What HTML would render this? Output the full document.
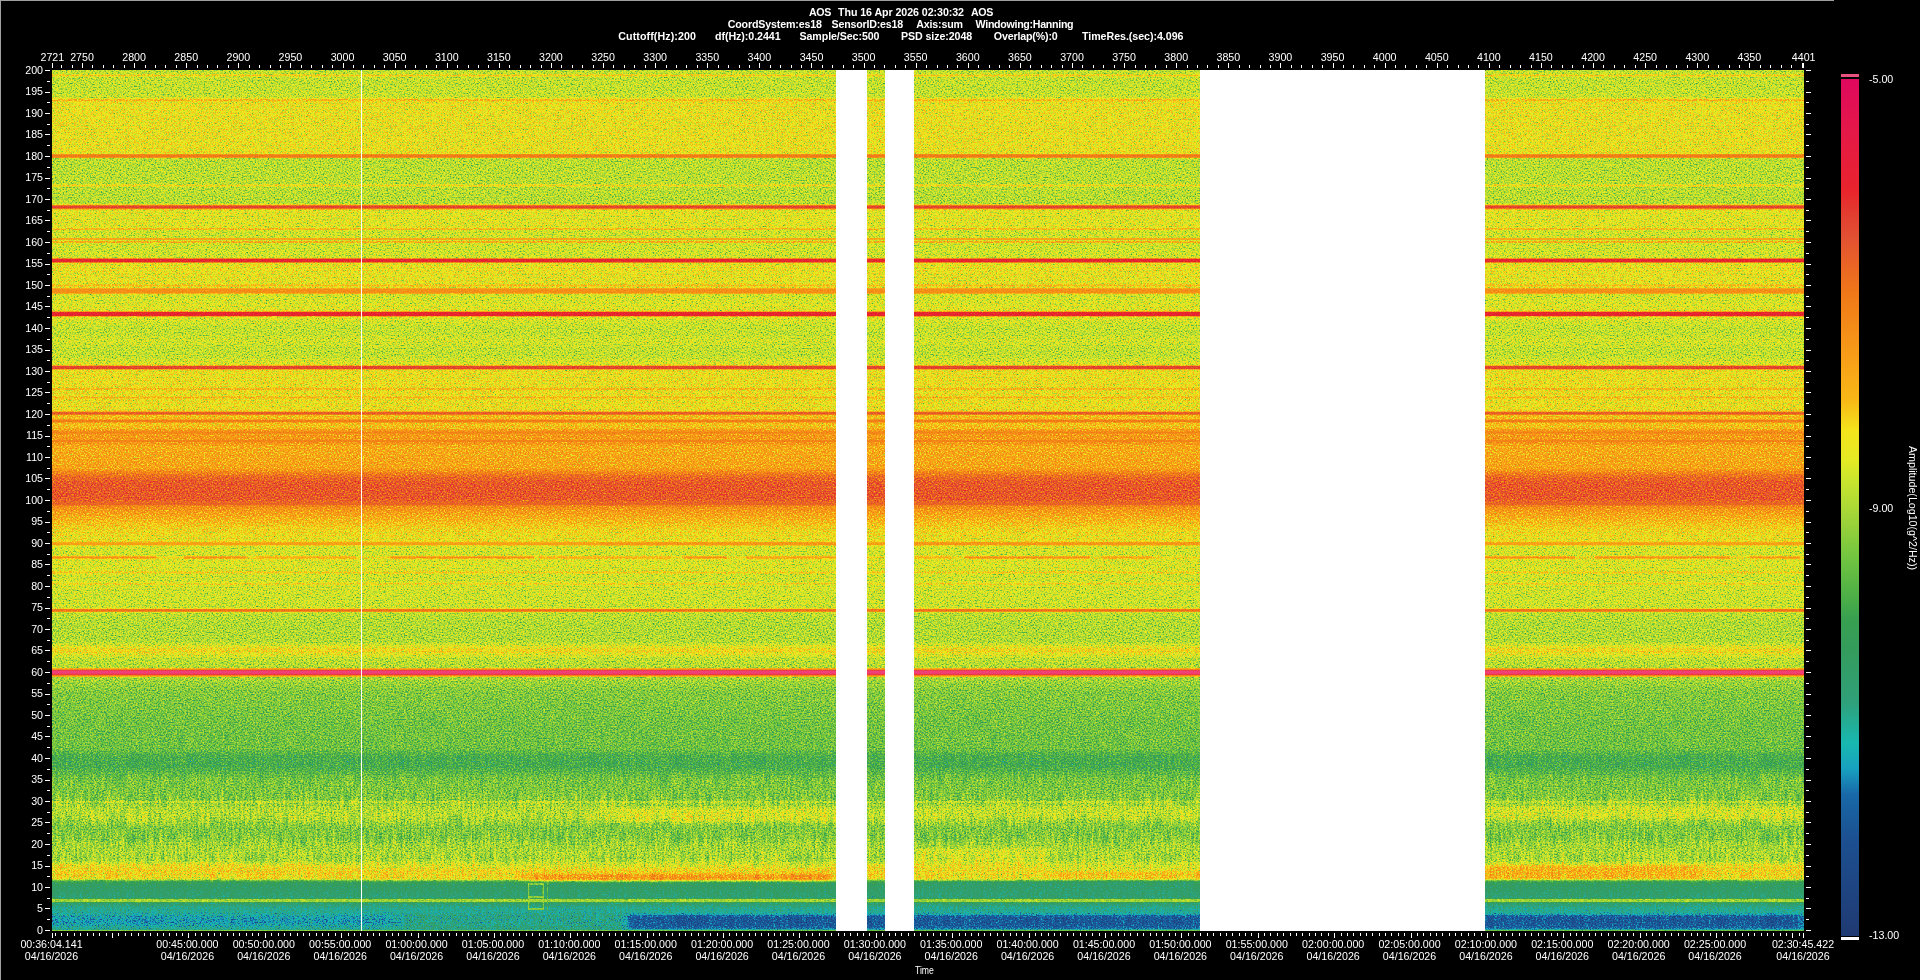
<!DOCTYPE html>
<html><head><meta charset="utf-8"><title>AOS spectrogram</title>
<style>
html,body{margin:0;padding:0;background:#000;}
body{width:1920px;height:980px;position:relative;overflow:hidden;
 font-family:"Liberation Sans",sans-serif;font-size:10.67px;color:#fff;line-height:12px;}
.t{position:absolute;white-space:pre;}
#tx{position:absolute;left:0;top:0;width:1920px;height:980px;will-change:transform;}
.b{font-weight:bold;}
.c{transform:translateX(-50%);text-align:center;}
.r{text-align:right;}
svg{position:absolute;left:0;top:0;}
</style></head><body>
<svg width="1752" height="861" viewBox="0 0 1752 861" style="left:52px;top:70px">
<defs>
<linearGradient id="prof" x1="0" y1="0" x2="0" y2="1"><stop offset="0.00000" stop-color="#861fff"/><stop offset="0.00465" stop-color="#861fff"/><stop offset="0.00581" stop-color="#9d1fff"/><stop offset="0.00697" stop-color="#9d1fff"/><stop offset="0.00813" stop-color="#861fff"/><stop offset="0.03020" stop-color="#871fff"/><stop offset="0.03252" stop-color="#8b1fff"/><stop offset="0.03368" stop-color="#9a1fff"/><stop offset="0.03426" stop-color="#a11fff"/><stop offset="0.03542" stop-color="#a11fff"/><stop offset="0.03659" stop-color="#971fff"/><stop offset="0.03717" stop-color="#931fff"/><stop offset="0.09640" stop-color="#931fff"/><stop offset="0.09698" stop-color="#921fff"/><stop offset="0.09756" stop-color="#9e1fcd"/><stop offset="0.09814" stop-color="#b51f7a"/><stop offset="0.09872" stop-color="#be1f59"/><stop offset="0.10105" stop-color="#be1f59"/><stop offset="0.10163" stop-color="#b31f7a"/><stop offset="0.10221" stop-color="#971fcd"/><stop offset="0.10279" stop-color="#851fff"/><stop offset="0.10337" stop-color="#841fff"/><stop offset="0.13240" stop-color="#841fff"/><stop offset="0.13357" stop-color="#991fff"/><stop offset="0.13473" stop-color="#991fff"/><stop offset="0.13589" stop-color="#841fff"/><stop offset="0.15447" stop-color="#831fff"/><stop offset="0.15563" stop-color="#851fff"/><stop offset="0.15738" stop-color="#c11f83"/><stop offset="0.15796" stop-color="#d41f59"/><stop offset="0.16028" stop-color="#d41f59"/><stop offset="0.16202" stop-color="#9f1fd6"/><stop offset="0.16260" stop-color="#8e1fff"/><stop offset="0.16376" stop-color="#901fff"/><stop offset="0.18235" stop-color="#8f1fff"/><stop offset="0.18293" stop-color="#8f1fff"/><stop offset="0.18409" stop-color="#a11fff"/><stop offset="0.18525" stop-color="#a11fff"/><stop offset="0.18641" stop-color="#8a1fff"/><stop offset="0.18815" stop-color="#8a1fff"/><stop offset="0.19454" stop-color="#8a1fff"/><stop offset="0.19570" stop-color="#a81f59"/><stop offset="0.19686" stop-color="#a81f59"/><stop offset="0.19803" stop-color="#8a1fff"/><stop offset="0.19919" stop-color="#a61fff"/><stop offset="0.20035" stop-color="#a61fff"/><stop offset="0.20151" stop-color="#8a1fff"/><stop offset="0.21719" stop-color="#8a1fff"/><stop offset="0.21777" stop-color="#8b1fff"/><stop offset="0.21835" stop-color="#9c1fde"/><stop offset="0.21951" stop-color="#d31f6f"/><stop offset="0.22009" stop-color="#de1f59"/><stop offset="0.22242" stop-color="#de1f59"/><stop offset="0.22300" stop-color="#d41f6f"/><stop offset="0.22416" stop-color="#a11fde"/><stop offset="0.22474" stop-color="#921fff"/><stop offset="0.22822" stop-color="#931fff"/><stop offset="0.24855" stop-color="#911fff"/><stop offset="0.24971" stop-color="#a11fff"/><stop offset="0.25087" stop-color="#a11fff"/><stop offset="0.25203" stop-color="#901fff"/><stop offset="0.25261" stop-color="#901fff"/><stop offset="0.25436" stop-color="#b41f59"/><stop offset="0.25900" stop-color="#b41f59"/><stop offset="0.26074" stop-color="#8c1fff"/><stop offset="0.26423" stop-color="#8b1fff"/><stop offset="0.27933" stop-color="#901fff"/><stop offset="0.27991" stop-color="#901fff"/><stop offset="0.28165" stop-color="#df1f59"/><stop offset="0.28513" stop-color="#df1f59"/><stop offset="0.28688" stop-color="#8e1fff"/><stop offset="0.29384" stop-color="#8a1fff"/><stop offset="0.29849" stop-color="#871fff"/><stop offset="0.30604" stop-color="#861fff"/><stop offset="0.31359" stop-color="#8b1fff"/><stop offset="0.32462" stop-color="#861fff"/><stop offset="0.33217" stop-color="#861fff"/><stop offset="0.34146" stop-color="#8f1fff"/><stop offset="0.34262" stop-color="#901fff"/><stop offset="0.34437" stop-color="#d41f59"/><stop offset="0.34669" stop-color="#d41f59"/><stop offset="0.34843" stop-color="#931fff"/><stop offset="0.35192" stop-color="#941fff"/><stop offset="0.36876" stop-color="#941fff"/><stop offset="0.36992" stop-color="#a31fff"/><stop offset="0.37108" stop-color="#a31fff"/><stop offset="0.37224" stop-color="#941fff"/><stop offset="0.37863" stop-color="#941fff"/><stop offset="0.37979" stop-color="#a31fff"/><stop offset="0.38095" stop-color="#a31fff"/><stop offset="0.38211" stop-color="#941fff"/><stop offset="0.39489" stop-color="#941fff"/><stop offset="0.39605" stop-color="#971fff"/><stop offset="0.39663" stop-color="#a61fd3"/><stop offset="0.39779" stop-color="#c91f64"/><stop offset="0.39837" stop-color="#cc1f59"/><stop offset="0.39954" stop-color="#cc1f59"/><stop offset="0.40128" stop-color="#a11fff"/><stop offset="0.40476" stop-color="#a11fff"/><stop offset="0.40534" stop-color="#a41fe9"/><stop offset="0.40650" stop-color="#b71f7a"/><stop offset="0.40708" stop-color="#bd1f59"/><stop offset="0.40825" stop-color="#bd1f59"/><stop offset="0.40883" stop-color="#b71f7a"/><stop offset="0.40999" stop-color="#a31fe9"/><stop offset="0.41057" stop-color="#a01fff"/><stop offset="0.41580" stop-color="#a11fff"/><stop offset="0.41812" stop-color="#af1fff"/><stop offset="0.41928" stop-color="#af1fff"/><stop offset="0.42044" stop-color="#ba1f59"/><stop offset="0.42160" stop-color="#ba1f59"/><stop offset="0.42276" stop-color="#af1fff"/><stop offset="0.42915" stop-color="#b01fff"/><stop offset="0.43031" stop-color="#ba1f59"/><stop offset="0.43148" stop-color="#ba1f59"/><stop offset="0.43264" stop-color="#b01fff"/><stop offset="0.43438" stop-color="#b01fff"/><stop offset="0.43670" stop-color="#a81fff"/><stop offset="0.46225" stop-color="#ab1fff"/><stop offset="0.46864" stop-color="#bc1fff"/><stop offset="0.47271" stop-color="#c61fff"/><stop offset="0.47967" stop-color="#cd1fff"/><stop offset="0.49826" stop-color="#cd1fff"/><stop offset="0.50116" stop-color="#c71fff"/><stop offset="0.50174" stop-color="#c61fde"/><stop offset="0.50348" stop-color="#c91f59"/><stop offset="0.50407" stop-color="#c91f59"/><stop offset="0.50465" stop-color="#c71f7a"/><stop offset="0.50523" stop-color="#c21fb2"/><stop offset="0.50581" stop-color="#bd1fe9"/><stop offset="0.50639" stop-color="#b91fff"/><stop offset="0.50755" stop-color="#b51fff"/><stop offset="0.51858" stop-color="#a81fff"/><stop offset="0.53310" stop-color="#991fff"/><stop offset="0.53659" stop-color="#971fff"/><stop offset="0.54297" stop-color="#941fff"/><stop offset="0.54704" stop-color="#941fff"/><stop offset="0.54762" stop-color="#981fde"/><stop offset="0.54878" stop-color="#a71f6f"/><stop offset="0.54936" stop-color="#ab1f59"/><stop offset="0.55110" stop-color="#ab1f59"/><stop offset="0.55168" stop-color="#a51f7a"/><stop offset="0.55285" stop-color="#901fe9"/><stop offset="0.55343" stop-color="#8c1fff"/><stop offset="0.56446" stop-color="#8a1fff"/><stop offset="0.56562" stop-color="#991fff"/><stop offset="0.56678" stop-color="#991fff"/><stop offset="0.56794" stop-color="#8d1fff"/><stop offset="0.58188" stop-color="#8d1fff"/><stop offset="0.58304" stop-color="#9c1fff"/><stop offset="0.58420" stop-color="#9c1fff"/><stop offset="0.58537" stop-color="#8a1fff"/><stop offset="0.59466" stop-color="#8a1fff"/><stop offset="0.59524" stop-color="#8f1fff"/><stop offset="0.59582" stop-color="#961fff"/><stop offset="0.59640" stop-color="#991fff"/><stop offset="0.59698" stop-color="#991fff"/><stop offset="0.59756" stop-color="#951fff"/><stop offset="0.59814" stop-color="#8e1fff"/><stop offset="0.59872" stop-color="#8b1fff"/><stop offset="0.62485" stop-color="#881fff"/><stop offset="0.62544" stop-color="#971fd3"/><stop offset="0.62660" stop-color="#be1f64"/><stop offset="0.62718" stop-color="#c21f59"/><stop offset="0.62834" stop-color="#c21f59"/><stop offset="0.62892" stop-color="#b61f7a"/><stop offset="0.63008" stop-color="#8d1fe9"/><stop offset="0.63066" stop-color="#851fff"/><stop offset="0.64286" stop-color="#821fff"/><stop offset="0.66434" stop-color="#821fff"/><stop offset="0.67015" stop-color="#911fff"/><stop offset="0.67073" stop-color="#911fff"/><stop offset="0.67305" stop-color="#971fff"/><stop offset="0.67538" stop-color="#971fff"/><stop offset="0.67770" stop-color="#911fff"/><stop offset="0.67828" stop-color="#911fff"/><stop offset="0.68409" stop-color="#851fff"/><stop offset="0.69396" stop-color="#831fff"/><stop offset="0.69570" stop-color="#b81f59"/><stop offset="0.70383" stop-color="#b81f59"/><stop offset="0.70557" stop-color="#7f1fff"/><stop offset="0.70848" stop-color="#7e1fff"/><stop offset="0.72125" stop-color="#7638ff"/><stop offset="0.73171" stop-color="#754cff"/><stop offset="0.76016" stop-color="#715cff"/><stop offset="0.78862" stop-color="#706cff"/><stop offset="0.79675" stop-color="#6470ff"/><stop offset="0.80139" stop-color="#6373ff"/><stop offset="0.80836" stop-color="#6285ff"/><stop offset="0.82172" stop-color="#70a8ff"/><stop offset="0.82520" stop-color="#73b1ff"/><stop offset="0.84553" stop-color="#75e7ff"/><stop offset="0.84843" stop-color="#78eeff"/><stop offset="0.84959" stop-color="#85f1ff"/><stop offset="0.85075" stop-color="#85f4ff"/><stop offset="0.85192" stop-color="#7cf7ff"/><stop offset="0.85482" stop-color="#7fffff"/><stop offset="0.85772" stop-color="#82ffff"/><stop offset="0.86760" stop-color="#83ffff"/><stop offset="0.88037" stop-color="#75ffff"/><stop offset="0.89199" stop-color="#75ffff"/><stop offset="0.89895" stop-color="#7dffff"/><stop offset="0.90883" stop-color="#80ffff"/><stop offset="0.91521" stop-color="#7effff"/><stop offset="0.91870" stop-color="#81ffff"/><stop offset="0.92334" stop-color="#93ffff"/><stop offset="0.92915" stop-color="#99ffff"/><stop offset="0.93612" stop-color="#98ffff"/><stop offset="0.93844" stop-color="#94ffff"/><stop offset="0.93961" stop-color="#92dfe2"/><stop offset="0.94193" stop-color="#639fa9"/><stop offset="0.94309" stop-color="#5e808c"/><stop offset="0.94541" stop-color="#54808c"/><stop offset="0.96109" stop-color="#4b808c"/><stop offset="0.96167" stop-color="#4b808c"/><stop offset="0.96341" stop-color="#7d808c"/><stop offset="0.96574" stop-color="#7d808c"/><stop offset="0.96748" stop-color="#4c808c"/><stop offset="0.96864" stop-color="#4c808c"/><stop offset="0.97329" stop-color="#42808c"/><stop offset="0.97793" stop-color="#40808c"/><stop offset="0.98026" stop-color="#3e80b9"/><stop offset="0.98258" stop-color="#3980e6"/><stop offset="0.98374" stop-color="#3780e6"/><stop offset="0.98955" stop-color="#3380e6"/><stop offset="0.99768" stop-color="#4280e6"/><stop offset="0.99826" stop-color="#4380a6"/><stop offset="0.99884" stop-color="#758066"/><stop offset="1.00000" stop-color="#758066"/></linearGradient>
<filter id="spec" x="0" y="0" width="100%%" height="100%%" filterUnits="objectBoundingBox" color-interpolation-filters="sRGB">
<feColorMatrix in="SourceGraphic" type="matrix" values="1 0 0 0 0 1 0 0 0 0 1 0 0 0 0 0 0 0 0 1" result="V0"/>
<feColorMatrix in="SourceGraphic" type="matrix" values="0 1 0 0 0 0 1 0 0 0 0 1 0 0 0 0 0 0 0 1" result="M"/>
<feTurbulence type="fractalNoise" baseFrequency="0.63 0.69" numOctaves="2" seed="7" result="n"/>
<feColorMatrix in="n" type="matrix" values="1 0 0 0 0 1 0 0 0 0 1 0 0 0 0 0 0 0 0 1" result="n0"/>
<feComponentTransfer in="n0" result="n1"><feFuncR type="table" tableValues="0.0000 0.0000 0.0000 0.0000 0.0000 0.0000 0.0000 0.0000 0.0288 0.0689 0.1077 0.1451 0.1813 0.2162 0.2500 0.2825 0.3138 0.3441 0.3732 0.4013 0.4284 0.4545 0.4796 0.5039 0.5273 0.5499 0.5716 0.5927 0.6130 0.6326 0.6515 0.6698 0.6875 0.7046 0.7212 0.7373 0.7528 0.7679 0.7825 0.7967 0.8105 0.8239 0.8369 0.8495 0.8618 0.8738 0.8855 0.8968 0.9079 0.9187 0.9292 0.9395 0.9495 0.9593 0.9689 0.9782 0.9873 0.9963 1.0000 1.0000 1.0000 1.0000 1.0000 1.0000 1.0000"/><feFuncG type="table" tableValues="0.0000 0.0000 0.0000 0.0000 0.0000 0.0000 0.0000 0.0000 0.0288 0.0689 0.1077 0.1451 0.1813 0.2162 0.2500 0.2825 0.3138 0.3441 0.3732 0.4013 0.4284 0.4545 0.4796 0.5039 0.5273 0.5499 0.5716 0.5927 0.6130 0.6326 0.6515 0.6698 0.6875 0.7046 0.7212 0.7373 0.7528 0.7679 0.7825 0.7967 0.8105 0.8239 0.8369 0.8495 0.8618 0.8738 0.8855 0.8968 0.9079 0.9187 0.9292 0.9395 0.9495 0.9593 0.9689 0.9782 0.9873 0.9963 1.0000 1.0000 1.0000 1.0000 1.0000 1.0000 1.0000"/><feFuncB type="table" tableValues="0.0000 0.0000 0.0000 0.0000 0.0000 0.0000 0.0000 0.0000 0.0288 0.0689 0.1077 0.1451 0.1813 0.2162 0.2500 0.2825 0.3138 0.3441 0.3732 0.4013 0.4284 0.4545 0.4796 0.5039 0.5273 0.5499 0.5716 0.5927 0.6130 0.6326 0.6515 0.6698 0.6875 0.7046 0.7212 0.7373 0.7528 0.7679 0.7825 0.7967 0.8105 0.8239 0.8369 0.8495 0.8618 0.8738 0.8855 0.8968 0.9079 0.9187 0.9292 0.9395 0.9495 0.9593 0.9689 0.9782 0.9873 0.9963 1.0000 1.0000 1.0000 1.0000 1.0000 1.0000 1.0000"/></feComponentTransfer>
<feTurbulence type="fractalNoise" baseFrequency="0.47 0.05" numOctaves="2" seed="11" result="s"/>
<feColorMatrix in="s" type="matrix" values="1 0 0 0 0 1 0 0 0 0 1 0 0 0 0 0 0 0 0 1" result="s0"/>
<feComposite in="M" in2="s0" operator="arithmetic" k1="1" k2="-0.5" k3="0" k4="0.5" result="P"/>
<feColorMatrix in="SourceGraphic" type="matrix" values="0 0 1 0 0 0 0 1 0 0 0 0 1 0 0 0 0 0 0 1" result="Wt"/>
<feComposite in="Wt" in2="n1" operator="arithmetic" k1="1" k2="-0.6875" k3="0" k4="0.6875" result="n2"/>
<feComposite in="V0" in2="n2" operator="arithmetic" k1="0" k2="1" k3="0.32" k4="-0.22" result="v1"/>
<feComposite in="v1" in2="P" operator="arithmetic" k1="0" k2="1" k3="0.19" k4="-0.095" result="v"/>
<feComponentTransfer in="v">
<feFuncR type="table" tableValues="0.125 0.124 0.123 0.121 0.120 0.118 0.117 0.116 0.114 0.113 0.111 0.110 0.107 0.104 0.101 0.098 0.096 0.094 0.094 0.094 0.094 0.094 0.094 0.104 0.122 0.141 0.160 0.179 0.190 0.192 0.195 0.197 0.200 0.203 0.206 0.211 0.215 0.220 0.251 0.282 0.314 0.345 0.376 0.408 0.439 0.478 0.518 0.557 0.596 0.635 0.675 0.711 0.748 0.784 0.828 0.872 0.903 0.921 0.939 0.957 0.961 0.966 0.970 0.973 0.973 0.973 0.973 0.973 0.969 0.965 0.961 0.957 0.953 0.949 0.945 0.941 0.933 0.925 0.918 0.910 0.901 0.892 0.886 0.886 0.886 0.894 0.902 0.910 0.908 0.905 0.903 0.901 0.899 0.896 0.894 0.892 0.889 0.886 0.884 0.881 0.878"/>
<feFuncG type="table" tableValues="0.227 0.235 0.242 0.250 0.257 0.265 0.272 0.280 0.287 0.295 0.302 0.310 0.328 0.345 0.363 0.381 0.399 0.444 0.518 0.591 0.643 0.675 0.706 0.712 0.693 0.675 0.656 0.637 0.626 0.624 0.621 0.618 0.616 0.613 0.614 0.618 0.623 0.627 0.651 0.675 0.693 0.712 0.731 0.750 0.769 0.782 0.795 0.808 0.821 0.834 0.847 0.863 0.878 0.894 0.904 0.913 0.914 0.908 0.901 0.894 0.845 0.796 0.746 0.711 0.690 0.669 0.648 0.627 0.608 0.588 0.569 0.549 0.529 0.510 0.490 0.471 0.447 0.424 0.400 0.376 0.352 0.328 0.302 0.274 0.246 0.211 0.176 0.141 0.134 0.128 0.121 0.114 0.108 0.101 0.094 0.084 0.073 0.063 0.052 0.042 0.031"/>
<feFuncB type="table" tableValues="0.447 0.458 0.468 0.479 0.490 0.501 0.511 0.522 0.533 0.543 0.554 0.565 0.582 0.599 0.616 0.633 0.650 0.675 0.706 0.737 0.742 0.722 0.701 0.668 0.624 0.580 0.536 0.493 0.461 0.443 0.425 0.407 0.388 0.370 0.354 0.341 0.327 0.314 0.298 0.282 0.276 0.270 0.264 0.257 0.251 0.244 0.238 0.231 0.225 0.218 0.212 0.201 0.191 0.180 0.165 0.149 0.137 0.128 0.119 0.110 0.103 0.096 0.090 0.087 0.089 0.091 0.092 0.094 0.094 0.094 0.094 0.094 0.094 0.094 0.094 0.094 0.110 0.125 0.141 0.157 0.172 0.187 0.195 0.192 0.189 0.183 0.178 0.173 0.188 0.204 0.220 0.235 0.251 0.267 0.282 0.297 0.311 0.325 0.340 0.354 0.369"/>
<feFuncA type="linear" slope="0" intercept="1"/>
</feComponentTransfer>
</filter>
<filter id="pb" x="-2%" y="-5%" width="104%" height="110%"><feGaussianBlur stdDeviation="6 1.2"/></filter>
</defs>
<g filter="url(#spec)">
<rect x="0" y="0" width="1752" height="861" fill="url(#prof)"/>
<rect x="0" y="486.5" width="104" height="2" fill="#b81e72"/>
<rect x="0" y="485.5" width="104" height="4" fill="#a81eb2" fill-opacity="0.35"/>
<rect x="132" y="486.5" width="62" height="2" fill="#b81e72"/>
<rect x="132" y="485.5" width="62" height="4" fill="#a81eb2" fill-opacity="0.35"/>
<rect x="204" y="486.5" width="100" height="2" fill="#a31e72"/>
<rect x="204" y="485.5" width="100" height="4" fill="#a81eb2" fill-opacity="0.35"/>
<rect x="338" y="486.5" width="144" height="2" fill="#b81e72"/>
<rect x="338" y="485.5" width="144" height="4" fill="#a81eb2" fill-opacity="0.35"/>
<rect x="488" y="486.5" width="131" height="2" fill="#a11e72"/>
<rect x="488" y="485.5" width="131" height="4" fill="#a81eb2" fill-opacity="0.35"/>
<rect x="632" y="486.5" width="43" height="2" fill="#b81e72"/>
<rect x="632" y="485.5" width="43" height="4" fill="#a81eb2" fill-opacity="0.35"/>
<rect x="694" y="486.5" width="90" height="2" fill="#ab1e72"/>
<rect x="694" y="485.5" width="90" height="4" fill="#a81eb2" fill-opacity="0.35"/>
<rect x="863" y="486.5" width="37" height="2" fill="#a11e72"/>
<rect x="863" y="485.5" width="37" height="4" fill="#a81eb2" fill-opacity="0.35"/>
<rect x="913" y="486.5" width="125" height="2" fill="#b81e72"/>
<rect x="913" y="485.5" width="125" height="4" fill="#a81eb2" fill-opacity="0.35"/>
<rect x="1050" y="486.5" width="50" height="2" fill="#ab1e72"/>
<rect x="1050" y="485.5" width="50" height="4" fill="#a81eb2" fill-opacity="0.35"/>
<rect x="1433" y="486.5" width="90" height="2" fill="#b81e72"/>
<rect x="1433" y="485.5" width="90" height="4" fill="#a81eb2" fill-opacity="0.35"/>
<rect x="1543" y="486.5" width="135" height="2" fill="#b81e72"/>
<rect x="1543" y="485.5" width="135" height="4" fill="#a81eb2" fill-opacity="0.35"/>
<rect x="1698" y="486.5" width="50" height="2" fill="#b21e72"/>
<rect x="1698" y="485.5" width="50" height="4" fill="#a81eb2" fill-opacity="0.35"/>
<rect x="548" y="472.2" width="236" height="3" fill="#b21e99" fill-opacity="0.7"/>
<rect x="862" y="472.2" width="286" height="3" fill="#b21e99" fill-opacity="0.7"/>
<rect x="476" y="813" width="16" height="2" fill="#7f4c7f" fill-opacity="0.85"/>
<rect x="476" y="826" width="16" height="2" fill="#7f4c7f" fill-opacity="0.85"/>
<rect x="476" y="838" width="16" height="2" fill="#7f4c7f" fill-opacity="0.85"/>
<rect x="476" y="813" width="1.5" height="27" fill="#7f4c7f" fill-opacity="0.85"/>
<rect x="490.5" y="813" width="1.5" height="27" fill="#7f4c7f" fill-opacity="0.85"/>
<rect x="495" y="810" width="1" height="30" fill="#774c7f" fill-opacity="0.7"/>
<rect x="468" y="730" width="1" height="80" fill="#874c7f" fill-opacity="0.35"/>
<g filter="url(#pb)">
<rect x="573" y="845" width="1179" height="14" fill="#1a80e6" fill-opacity="0.75"/>
<rect x="348" y="844" width="225" height="15" fill="#4f80e6" fill-opacity="0.55"/>
<rect x="308" y="791" width="168" height="8" fill="#88ffff" fill-opacity="0.5"/>
<rect x="308" y="802" width="168" height="8" fill="#95ffff" fill-opacity="0.6"/>
<rect x="476" y="804" width="308" height="7" fill="#baffff" fill-opacity="0.7"/>
<rect x="476" y="791" width="308" height="7" fill="#87ffff" fill-opacity="0.5"/>
<rect x="862" y="778" width="136" height="32" fill="#93ffff" fill-opacity="0.6"/>
<rect x="998" y="791" width="150" height="10" fill="#85ffff" fill-opacity="0.6"/>
<rect x="998" y="802" width="150" height="7" fill="#a3ffff" fill-opacity="0.6"/>
<rect x="862" y="811" width="286" height="16" fill="#4c808c" fill-opacity="0.5"/>
<rect x="1433" y="796" width="215" height="13" fill="#adffff" fill-opacity="0.6"/>
<rect x="548" y="738" width="236" height="14" fill="#90ffff" fill-opacity="0.65"/>
<rect x="862" y="736" width="286" height="12" fill="#8bffff" fill-opacity="0.5"/>
<rect x="1433" y="736" width="319" height="13" fill="#8fffff" fill-opacity="0.6"/>
</g>
</g>
<rect x="0" y="600" width="1752" height="5" fill="#ea3c40"/>
<rect x="0" y="600.7" width="1752" height="3.1" fill="#f04078"/>
<rect x="784" y="0" width="31" height="861" fill="#fff"/>
<rect x="833" y="0" width="29" height="861" fill="#fff"/>
<rect x="1148" y="0" width="285" height="861" fill="#fff"/>
<rect x="309" y="0" width="1" height="861" fill="#fff"/>
</svg>
<svg width="1920" height="980" viewBox="0 0 1920 980" shape-rendering="crispEdges">
<defs><linearGradient id="cb" x1="0" y1="1" x2="0" y2="0"><stop offset="0.0000" stop-color="#203a72"/><stop offset="0.1100" stop-color="#1c4f90"/><stop offset="0.1650" stop-color="#1868a8"/><stop offset="0.1950" stop-color="#18a0c0"/><stop offset="0.2250" stop-color="#18b8b0"/><stop offset="0.2750" stop-color="#30a078"/><stop offset="0.3350" stop-color="#349c5c"/><stop offset="0.3700" stop-color="#38a050"/><stop offset="0.3900" stop-color="#48ac48"/><stop offset="0.4400" stop-color="#70c440"/><stop offset="0.5000" stop-color="#acd836"/><stop offset="0.5300" stop-color="#c8e42e"/><stop offset="0.5550" stop-color="#e4ea24"/><stop offset="0.5900" stop-color="#f4e41c"/><stop offset="0.6250" stop-color="#f8b816"/><stop offset="0.6700" stop-color="#f8a018"/><stop offset="0.7100" stop-color="#f48c18"/><stop offset="0.7500" stop-color="#f07818"/><stop offset="0.7900" stop-color="#e86028"/><stop offset="0.8160" stop-color="#e25032"/><stop offset="0.8410" stop-color="#e23e30"/><stop offset="0.8700" stop-color="#e8242c"/><stop offset="0.9400" stop-color="#e41848"/><stop offset="1.0000" stop-color="#e0085e"/></linearGradient></defs>
<rect x="0" y="0" width="1834" height="1" fill="#a0a0a0"/>
<rect x="0" y="0" width="1" height="980" fill="#a0a0a0"/>
<rect x="52" y="63" width="1" height="5" fill="#fff"/>
<rect x="61" y="65" width="1" height="3" fill="#fff"/>
<rect x="72" y="65" width="1" height="3" fill="#fff"/>
<rect x="82" y="63" width="1" height="5" fill="#fff"/>
<rect x="92" y="65" width="1" height="3" fill="#fff"/>
<rect x="103" y="65" width="1" height="3" fill="#fff"/>
<rect x="113" y="65" width="1" height="3" fill="#fff"/>
<rect x="124" y="65" width="1" height="3" fill="#fff"/>
<rect x="134" y="63" width="1" height="5" fill="#fff"/>
<rect x="145" y="65" width="1" height="3" fill="#fff"/>
<rect x="155" y="65" width="1" height="3" fill="#fff"/>
<rect x="165" y="65" width="1" height="3" fill="#fff"/>
<rect x="176" y="65" width="1" height="3" fill="#fff"/>
<rect x="186" y="63" width="1" height="5" fill="#fff"/>
<rect x="197" y="65" width="1" height="3" fill="#fff"/>
<rect x="207" y="65" width="1" height="3" fill="#fff"/>
<rect x="217" y="65" width="1" height="3" fill="#fff"/>
<rect x="228" y="65" width="1" height="3" fill="#fff"/>
<rect x="238" y="63" width="1" height="5" fill="#fff"/>
<rect x="249" y="65" width="1" height="3" fill="#fff"/>
<rect x="259" y="65" width="1" height="3" fill="#fff"/>
<rect x="270" y="65" width="1" height="3" fill="#fff"/>
<rect x="280" y="65" width="1" height="3" fill="#fff"/>
<rect x="290" y="63" width="1" height="5" fill="#fff"/>
<rect x="301" y="65" width="1" height="3" fill="#fff"/>
<rect x="311" y="65" width="1" height="3" fill="#fff"/>
<rect x="322" y="65" width="1" height="3" fill="#fff"/>
<rect x="332" y="65" width="1" height="3" fill="#fff"/>
<rect x="343" y="63" width="1" height="5" fill="#fff"/>
<rect x="353" y="65" width="1" height="3" fill="#fff"/>
<rect x="363" y="65" width="1" height="3" fill="#fff"/>
<rect x="374" y="65" width="1" height="3" fill="#fff"/>
<rect x="384" y="65" width="1" height="3" fill="#fff"/>
<rect x="395" y="63" width="1" height="5" fill="#fff"/>
<rect x="405" y="65" width="1" height="3" fill="#fff"/>
<rect x="415" y="65" width="1" height="3" fill="#fff"/>
<rect x="426" y="65" width="1" height="3" fill="#fff"/>
<rect x="436" y="65" width="1" height="3" fill="#fff"/>
<rect x="447" y="63" width="1" height="5" fill="#fff"/>
<rect x="457" y="65" width="1" height="3" fill="#fff"/>
<rect x="468" y="65" width="1" height="3" fill="#fff"/>
<rect x="478" y="65" width="1" height="3" fill="#fff"/>
<rect x="488" y="65" width="1" height="3" fill="#fff"/>
<rect x="499" y="63" width="1" height="5" fill="#fff"/>
<rect x="509" y="65" width="1" height="3" fill="#fff"/>
<rect x="520" y="65" width="1" height="3" fill="#fff"/>
<rect x="530" y="65" width="1" height="3" fill="#fff"/>
<rect x="541" y="65" width="1" height="3" fill="#fff"/>
<rect x="551" y="63" width="1" height="5" fill="#fff"/>
<rect x="561" y="65" width="1" height="3" fill="#fff"/>
<rect x="572" y="65" width="1" height="3" fill="#fff"/>
<rect x="582" y="65" width="1" height="3" fill="#fff"/>
<rect x="593" y="65" width="1" height="3" fill="#fff"/>
<rect x="603" y="63" width="1" height="5" fill="#fff"/>
<rect x="613" y="65" width="1" height="3" fill="#fff"/>
<rect x="624" y="65" width="1" height="3" fill="#fff"/>
<rect x="634" y="65" width="1" height="3" fill="#fff"/>
<rect x="645" y="65" width="1" height="3" fill="#fff"/>
<rect x="655" y="63" width="1" height="5" fill="#fff"/>
<rect x="666" y="65" width="1" height="3" fill="#fff"/>
<rect x="676" y="65" width="1" height="3" fill="#fff"/>
<rect x="686" y="65" width="1" height="3" fill="#fff"/>
<rect x="697" y="65" width="1" height="3" fill="#fff"/>
<rect x="707" y="63" width="1" height="5" fill="#fff"/>
<rect x="718" y="65" width="1" height="3" fill="#fff"/>
<rect x="728" y="65" width="1" height="3" fill="#fff"/>
<rect x="739" y="65" width="1" height="3" fill="#fff"/>
<rect x="749" y="65" width="1" height="3" fill="#fff"/>
<rect x="759" y="63" width="1" height="5" fill="#fff"/>
<rect x="770" y="65" width="1" height="3" fill="#fff"/>
<rect x="780" y="65" width="1" height="3" fill="#fff"/>
<rect x="791" y="65" width="1" height="3" fill="#fff"/>
<rect x="801" y="65" width="1" height="3" fill="#fff"/>
<rect x="811" y="63" width="1" height="5" fill="#fff"/>
<rect x="822" y="65" width="1" height="3" fill="#fff"/>
<rect x="832" y="65" width="1" height="3" fill="#fff"/>
<rect x="843" y="65" width="1" height="3" fill="#fff"/>
<rect x="853" y="65" width="1" height="3" fill="#fff"/>
<rect x="864" y="63" width="1" height="5" fill="#fff"/>
<rect x="874" y="65" width="1" height="3" fill="#fff"/>
<rect x="884" y="65" width="1" height="3" fill="#fff"/>
<rect x="895" y="65" width="1" height="3" fill="#fff"/>
<rect x="905" y="65" width="1" height="3" fill="#fff"/>
<rect x="916" y="63" width="1" height="5" fill="#fff"/>
<rect x="926" y="65" width="1" height="3" fill="#fff"/>
<rect x="937" y="65" width="1" height="3" fill="#fff"/>
<rect x="947" y="65" width="1" height="3" fill="#fff"/>
<rect x="957" y="65" width="1" height="3" fill="#fff"/>
<rect x="968" y="63" width="1" height="5" fill="#fff"/>
<rect x="978" y="65" width="1" height="3" fill="#fff"/>
<rect x="989" y="65" width="1" height="3" fill="#fff"/>
<rect x="999" y="65" width="1" height="3" fill="#fff"/>
<rect x="1009" y="65" width="1" height="3" fill="#fff"/>
<rect x="1020" y="63" width="1" height="5" fill="#fff"/>
<rect x="1030" y="65" width="1" height="3" fill="#fff"/>
<rect x="1041" y="65" width="1" height="3" fill="#fff"/>
<rect x="1051" y="65" width="1" height="3" fill="#fff"/>
<rect x="1062" y="65" width="1" height="3" fill="#fff"/>
<rect x="1072" y="63" width="1" height="5" fill="#fff"/>
<rect x="1082" y="65" width="1" height="3" fill="#fff"/>
<rect x="1093" y="65" width="1" height="3" fill="#fff"/>
<rect x="1103" y="65" width="1" height="3" fill="#fff"/>
<rect x="1114" y="65" width="1" height="3" fill="#fff"/>
<rect x="1124" y="63" width="1" height="5" fill="#fff"/>
<rect x="1135" y="65" width="1" height="3" fill="#fff"/>
<rect x="1145" y="65" width="1" height="3" fill="#fff"/>
<rect x="1155" y="65" width="1" height="3" fill="#fff"/>
<rect x="1166" y="65" width="1" height="3" fill="#fff"/>
<rect x="1176" y="63" width="1" height="5" fill="#fff"/>
<rect x="1187" y="65" width="1" height="3" fill="#fff"/>
<rect x="1197" y="65" width="1" height="3" fill="#fff"/>
<rect x="1207" y="65" width="1" height="3" fill="#fff"/>
<rect x="1218" y="65" width="1" height="3" fill="#fff"/>
<rect x="1228" y="63" width="1" height="5" fill="#fff"/>
<rect x="1239" y="65" width="1" height="3" fill="#fff"/>
<rect x="1249" y="65" width="1" height="3" fill="#fff"/>
<rect x="1260" y="65" width="1" height="3" fill="#fff"/>
<rect x="1270" y="65" width="1" height="3" fill="#fff"/>
<rect x="1280" y="63" width="1" height="5" fill="#fff"/>
<rect x="1291" y="65" width="1" height="3" fill="#fff"/>
<rect x="1301" y="65" width="1" height="3" fill="#fff"/>
<rect x="1312" y="65" width="1" height="3" fill="#fff"/>
<rect x="1322" y="65" width="1" height="3" fill="#fff"/>
<rect x="1333" y="63" width="1" height="5" fill="#fff"/>
<rect x="1343" y="65" width="1" height="3" fill="#fff"/>
<rect x="1353" y="65" width="1" height="3" fill="#fff"/>
<rect x="1364" y="65" width="1" height="3" fill="#fff"/>
<rect x="1374" y="65" width="1" height="3" fill="#fff"/>
<rect x="1385" y="63" width="1" height="5" fill="#fff"/>
<rect x="1395" y="65" width="1" height="3" fill="#fff"/>
<rect x="1405" y="65" width="1" height="3" fill="#fff"/>
<rect x="1416" y="65" width="1" height="3" fill="#fff"/>
<rect x="1426" y="65" width="1" height="3" fill="#fff"/>
<rect x="1437" y="63" width="1" height="5" fill="#fff"/>
<rect x="1447" y="65" width="1" height="3" fill="#fff"/>
<rect x="1458" y="65" width="1" height="3" fill="#fff"/>
<rect x="1468" y="65" width="1" height="3" fill="#fff"/>
<rect x="1478" y="65" width="1" height="3" fill="#fff"/>
<rect x="1489" y="63" width="1" height="5" fill="#fff"/>
<rect x="1499" y="65" width="1" height="3" fill="#fff"/>
<rect x="1510" y="65" width="1" height="3" fill="#fff"/>
<rect x="1520" y="65" width="1" height="3" fill="#fff"/>
<rect x="1531" y="65" width="1" height="3" fill="#fff"/>
<rect x="1541" y="63" width="1" height="5" fill="#fff"/>
<rect x="1551" y="65" width="1" height="3" fill="#fff"/>
<rect x="1562" y="65" width="1" height="3" fill="#fff"/>
<rect x="1572" y="65" width="1" height="3" fill="#fff"/>
<rect x="1583" y="65" width="1" height="3" fill="#fff"/>
<rect x="1593" y="63" width="1" height="5" fill="#fff"/>
<rect x="1603" y="65" width="1" height="3" fill="#fff"/>
<rect x="1614" y="65" width="1" height="3" fill="#fff"/>
<rect x="1624" y="65" width="1" height="3" fill="#fff"/>
<rect x="1635" y="65" width="1" height="3" fill="#fff"/>
<rect x="1645" y="63" width="1" height="5" fill="#fff"/>
<rect x="1656" y="65" width="1" height="3" fill="#fff"/>
<rect x="1666" y="65" width="1" height="3" fill="#fff"/>
<rect x="1676" y="65" width="1" height="3" fill="#fff"/>
<rect x="1687" y="65" width="1" height="3" fill="#fff"/>
<rect x="1697" y="63" width="1" height="5" fill="#fff"/>
<rect x="1708" y="65" width="1" height="3" fill="#fff"/>
<rect x="1718" y="65" width="1" height="3" fill="#fff"/>
<rect x="1729" y="65" width="1" height="3" fill="#fff"/>
<rect x="1739" y="65" width="1" height="3" fill="#fff"/>
<rect x="1749" y="63" width="1" height="5" fill="#fff"/>
<rect x="1760" y="65" width="1" height="3" fill="#fff"/>
<rect x="1770" y="65" width="1" height="3" fill="#fff"/>
<rect x="1781" y="65" width="1" height="3" fill="#fff"/>
<rect x="1791" y="65" width="1" height="3" fill="#fff"/>
<rect x="1802" y="63" width="2" height="5" fill="#fff"/>
<rect x="45" y="930" width="5" height="1" fill="#fff"/>
<rect x="1806" y="930" width="5" height="1" fill="#fff"/>
<rect x="47" y="919" width="3" height="1" fill="#fff"/>
<rect x="1806" y="919" width="3" height="1" fill="#fff"/>
<rect x="45" y="908" width="5" height="1" fill="#fff"/>
<rect x="1806" y="908" width="5" height="1" fill="#fff"/>
<rect x="47" y="898" width="3" height="1" fill="#fff"/>
<rect x="1806" y="898" width="3" height="1" fill="#fff"/>
<rect x="45" y="887" width="5" height="1" fill="#fff"/>
<rect x="1806" y="887" width="5" height="1" fill="#fff"/>
<rect x="47" y="876" width="3" height="1" fill="#fff"/>
<rect x="1806" y="876" width="3" height="1" fill="#fff"/>
<rect x="45" y="866" width="5" height="1" fill="#fff"/>
<rect x="1806" y="866" width="5" height="1" fill="#fff"/>
<rect x="47" y="855" width="3" height="1" fill="#fff"/>
<rect x="1806" y="855" width="3" height="1" fill="#fff"/>
<rect x="45" y="844" width="5" height="1" fill="#fff"/>
<rect x="1806" y="844" width="5" height="1" fill="#fff"/>
<rect x="47" y="833" width="3" height="1" fill="#fff"/>
<rect x="1806" y="833" width="3" height="1" fill="#fff"/>
<rect x="45" y="822" width="5" height="1" fill="#fff"/>
<rect x="1806" y="822" width="5" height="1" fill="#fff"/>
<rect x="47" y="812" width="3" height="1" fill="#fff"/>
<rect x="1806" y="812" width="3" height="1" fill="#fff"/>
<rect x="45" y="801" width="5" height="1" fill="#fff"/>
<rect x="1806" y="801" width="5" height="1" fill="#fff"/>
<rect x="47" y="790" width="3" height="1" fill="#fff"/>
<rect x="1806" y="790" width="3" height="1" fill="#fff"/>
<rect x="45" y="780" width="5" height="1" fill="#fff"/>
<rect x="1806" y="780" width="5" height="1" fill="#fff"/>
<rect x="47" y="769" width="3" height="1" fill="#fff"/>
<rect x="1806" y="769" width="3" height="1" fill="#fff"/>
<rect x="45" y="758" width="5" height="1" fill="#fff"/>
<rect x="1806" y="758" width="5" height="1" fill="#fff"/>
<rect x="47" y="747" width="3" height="1" fill="#fff"/>
<rect x="1806" y="747" width="3" height="1" fill="#fff"/>
<rect x="45" y="736" width="5" height="1" fill="#fff"/>
<rect x="1806" y="736" width="5" height="1" fill="#fff"/>
<rect x="47" y="726" width="3" height="1" fill="#fff"/>
<rect x="1806" y="726" width="3" height="1" fill="#fff"/>
<rect x="45" y="715" width="5" height="1" fill="#fff"/>
<rect x="1806" y="715" width="5" height="1" fill="#fff"/>
<rect x="47" y="704" width="3" height="1" fill="#fff"/>
<rect x="1806" y="704" width="3" height="1" fill="#fff"/>
<rect x="45" y="694" width="5" height="1" fill="#fff"/>
<rect x="1806" y="694" width="5" height="1" fill="#fff"/>
<rect x="47" y="683" width="3" height="1" fill="#fff"/>
<rect x="1806" y="683" width="3" height="1" fill="#fff"/>
<rect x="45" y="672" width="5" height="1" fill="#fff"/>
<rect x="1806" y="672" width="5" height="1" fill="#fff"/>
<rect x="47" y="661" width="3" height="1" fill="#fff"/>
<rect x="1806" y="661" width="3" height="1" fill="#fff"/>
<rect x="45" y="650" width="5" height="1" fill="#fff"/>
<rect x="1806" y="650" width="5" height="1" fill="#fff"/>
<rect x="47" y="640" width="3" height="1" fill="#fff"/>
<rect x="1806" y="640" width="3" height="1" fill="#fff"/>
<rect x="45" y="629" width="5" height="1" fill="#fff"/>
<rect x="1806" y="629" width="5" height="1" fill="#fff"/>
<rect x="47" y="618" width="3" height="1" fill="#fff"/>
<rect x="1806" y="618" width="3" height="1" fill="#fff"/>
<rect x="45" y="608" width="5" height="1" fill="#fff"/>
<rect x="1806" y="608" width="5" height="1" fill="#fff"/>
<rect x="47" y="597" width="3" height="1" fill="#fff"/>
<rect x="1806" y="597" width="3" height="1" fill="#fff"/>
<rect x="45" y="586" width="5" height="1" fill="#fff"/>
<rect x="1806" y="586" width="5" height="1" fill="#fff"/>
<rect x="47" y="575" width="3" height="1" fill="#fff"/>
<rect x="1806" y="575" width="3" height="1" fill="#fff"/>
<rect x="45" y="564" width="5" height="1" fill="#fff"/>
<rect x="1806" y="564" width="5" height="1" fill="#fff"/>
<rect x="47" y="554" width="3" height="1" fill="#fff"/>
<rect x="1806" y="554" width="3" height="1" fill="#fff"/>
<rect x="45" y="543" width="5" height="1" fill="#fff"/>
<rect x="1806" y="543" width="5" height="1" fill="#fff"/>
<rect x="47" y="532" width="3" height="1" fill="#fff"/>
<rect x="1806" y="532" width="3" height="1" fill="#fff"/>
<rect x="45" y="522" width="5" height="1" fill="#fff"/>
<rect x="1806" y="522" width="5" height="1" fill="#fff"/>
<rect x="47" y="511" width="3" height="1" fill="#fff"/>
<rect x="1806" y="511" width="3" height="1" fill="#fff"/>
<rect x="45" y="500" width="5" height="1" fill="#fff"/>
<rect x="1806" y="500" width="5" height="1" fill="#fff"/>
<rect x="47" y="489" width="3" height="1" fill="#fff"/>
<rect x="1806" y="489" width="3" height="1" fill="#fff"/>
<rect x="45" y="478" width="5" height="1" fill="#fff"/>
<rect x="1806" y="478" width="5" height="1" fill="#fff"/>
<rect x="47" y="468" width="3" height="1" fill="#fff"/>
<rect x="1806" y="468" width="3" height="1" fill="#fff"/>
<rect x="45" y="457" width="5" height="1" fill="#fff"/>
<rect x="1806" y="457" width="5" height="1" fill="#fff"/>
<rect x="47" y="446" width="3" height="1" fill="#fff"/>
<rect x="1806" y="446" width="3" height="1" fill="#fff"/>
<rect x="45" y="436" width="5" height="1" fill="#fff"/>
<rect x="1806" y="436" width="5" height="1" fill="#fff"/>
<rect x="47" y="425" width="3" height="1" fill="#fff"/>
<rect x="1806" y="425" width="3" height="1" fill="#fff"/>
<rect x="45" y="414" width="5" height="1" fill="#fff"/>
<rect x="1806" y="414" width="5" height="1" fill="#fff"/>
<rect x="47" y="403" width="3" height="1" fill="#fff"/>
<rect x="1806" y="403" width="3" height="1" fill="#fff"/>
<rect x="45" y="392" width="5" height="1" fill="#fff"/>
<rect x="1806" y="392" width="5" height="1" fill="#fff"/>
<rect x="47" y="382" width="3" height="1" fill="#fff"/>
<rect x="1806" y="382" width="3" height="1" fill="#fff"/>
<rect x="45" y="371" width="5" height="1" fill="#fff"/>
<rect x="1806" y="371" width="5" height="1" fill="#fff"/>
<rect x="47" y="360" width="3" height="1" fill="#fff"/>
<rect x="1806" y="360" width="3" height="1" fill="#fff"/>
<rect x="45" y="350" width="5" height="1" fill="#fff"/>
<rect x="1806" y="350" width="5" height="1" fill="#fff"/>
<rect x="47" y="339" width="3" height="1" fill="#fff"/>
<rect x="1806" y="339" width="3" height="1" fill="#fff"/>
<rect x="45" y="328" width="5" height="1" fill="#fff"/>
<rect x="1806" y="328" width="5" height="1" fill="#fff"/>
<rect x="47" y="317" width="3" height="1" fill="#fff"/>
<rect x="1806" y="317" width="3" height="1" fill="#fff"/>
<rect x="45" y="306" width="5" height="1" fill="#fff"/>
<rect x="1806" y="306" width="5" height="1" fill="#fff"/>
<rect x="47" y="296" width="3" height="1" fill="#fff"/>
<rect x="1806" y="296" width="3" height="1" fill="#fff"/>
<rect x="45" y="285" width="5" height="1" fill="#fff"/>
<rect x="1806" y="285" width="5" height="1" fill="#fff"/>
<rect x="47" y="274" width="3" height="1" fill="#fff"/>
<rect x="1806" y="274" width="3" height="1" fill="#fff"/>
<rect x="45" y="264" width="5" height="1" fill="#fff"/>
<rect x="1806" y="264" width="5" height="1" fill="#fff"/>
<rect x="47" y="253" width="3" height="1" fill="#fff"/>
<rect x="1806" y="253" width="3" height="1" fill="#fff"/>
<rect x="45" y="242" width="5" height="1" fill="#fff"/>
<rect x="1806" y="242" width="5" height="1" fill="#fff"/>
<rect x="47" y="231" width="3" height="1" fill="#fff"/>
<rect x="1806" y="231" width="3" height="1" fill="#fff"/>
<rect x="45" y="220" width="5" height="1" fill="#fff"/>
<rect x="1806" y="220" width="5" height="1" fill="#fff"/>
<rect x="47" y="210" width="3" height="1" fill="#fff"/>
<rect x="1806" y="210" width="3" height="1" fill="#fff"/>
<rect x="45" y="199" width="5" height="1" fill="#fff"/>
<rect x="1806" y="199" width="5" height="1" fill="#fff"/>
<rect x="47" y="188" width="3" height="1" fill="#fff"/>
<rect x="1806" y="188" width="3" height="1" fill="#fff"/>
<rect x="45" y="178" width="5" height="1" fill="#fff"/>
<rect x="1806" y="178" width="5" height="1" fill="#fff"/>
<rect x="47" y="167" width="3" height="1" fill="#fff"/>
<rect x="1806" y="167" width="3" height="1" fill="#fff"/>
<rect x="45" y="156" width="5" height="1" fill="#fff"/>
<rect x="1806" y="156" width="5" height="1" fill="#fff"/>
<rect x="47" y="145" width="3" height="1" fill="#fff"/>
<rect x="1806" y="145" width="3" height="1" fill="#fff"/>
<rect x="45" y="134" width="5" height="1" fill="#fff"/>
<rect x="1806" y="134" width="5" height="1" fill="#fff"/>
<rect x="47" y="124" width="3" height="1" fill="#fff"/>
<rect x="1806" y="124" width="3" height="1" fill="#fff"/>
<rect x="45" y="113" width="5" height="1" fill="#fff"/>
<rect x="1806" y="113" width="5" height="1" fill="#fff"/>
<rect x="47" y="102" width="3" height="1" fill="#fff"/>
<rect x="1806" y="102" width="3" height="1" fill="#fff"/>
<rect x="45" y="92" width="5" height="1" fill="#fff"/>
<rect x="1806" y="92" width="5" height="1" fill="#fff"/>
<rect x="47" y="81" width="3" height="1" fill="#fff"/>
<rect x="1806" y="81" width="3" height="1" fill="#fff"/>
<rect x="45" y="70" width="5" height="1" fill="#fff"/>
<rect x="1806" y="70" width="5" height="1" fill="#fff"/>
<rect x="52" y="933" width="1" height="5" fill="#fff"/>
<rect x="55" y="933" width="1" height="3" fill="#fff"/>
<rect x="61" y="933" width="1" height="3" fill="#fff"/>
<rect x="67" y="933" width="1" height="3" fill="#fff"/>
<rect x="74" y="933" width="1" height="3" fill="#fff"/>
<rect x="80" y="933" width="1" height="3" fill="#fff"/>
<rect x="87" y="933" width="1" height="3" fill="#fff"/>
<rect x="93" y="933" width="1" height="3" fill="#fff"/>
<rect x="99" y="933" width="1" height="3" fill="#fff"/>
<rect x="106" y="933" width="1" height="3" fill="#fff"/>
<rect x="112" y="933" width="1" height="5" fill="#fff"/>
<rect x="118" y="933" width="1" height="3" fill="#fff"/>
<rect x="125" y="933" width="1" height="3" fill="#fff"/>
<rect x="131" y="933" width="1" height="3" fill="#fff"/>
<rect x="138" y="933" width="1" height="3" fill="#fff"/>
<rect x="144" y="933" width="1" height="3" fill="#fff"/>
<rect x="150" y="933" width="1" height="3" fill="#fff"/>
<rect x="157" y="933" width="1" height="3" fill="#fff"/>
<rect x="163" y="933" width="1" height="3" fill="#fff"/>
<rect x="169" y="933" width="1" height="3" fill="#fff"/>
<rect x="176" y="933" width="1" height="3" fill="#fff"/>
<rect x="182" y="933" width="1" height="3" fill="#fff"/>
<rect x="188" y="933" width="1" height="5" fill="#fff"/>
<rect x="195" y="933" width="1" height="3" fill="#fff"/>
<rect x="201" y="933" width="1" height="3" fill="#fff"/>
<rect x="208" y="933" width="1" height="3" fill="#fff"/>
<rect x="214" y="933" width="1" height="3" fill="#fff"/>
<rect x="220" y="933" width="1" height="3" fill="#fff"/>
<rect x="227" y="933" width="1" height="3" fill="#fff"/>
<rect x="233" y="933" width="1" height="3" fill="#fff"/>
<rect x="239" y="933" width="1" height="3" fill="#fff"/>
<rect x="246" y="933" width="1" height="3" fill="#fff"/>
<rect x="252" y="933" width="1" height="3" fill="#fff"/>
<rect x="258" y="933" width="1" height="3" fill="#fff"/>
<rect x="265" y="933" width="1" height="5" fill="#fff"/>
<rect x="271" y="933" width="1" height="3" fill="#fff"/>
<rect x="278" y="933" width="1" height="3" fill="#fff"/>
<rect x="284" y="933" width="1" height="3" fill="#fff"/>
<rect x="290" y="933" width="1" height="3" fill="#fff"/>
<rect x="297" y="933" width="1" height="3" fill="#fff"/>
<rect x="303" y="933" width="1" height="3" fill="#fff"/>
<rect x="309" y="933" width="1" height="3" fill="#fff"/>
<rect x="316" y="933" width="1" height="3" fill="#fff"/>
<rect x="322" y="933" width="1" height="3" fill="#fff"/>
<rect x="328" y="933" width="1" height="3" fill="#fff"/>
<rect x="335" y="933" width="1" height="3" fill="#fff"/>
<rect x="341" y="933" width="1" height="5" fill="#fff"/>
<rect x="348" y="933" width="1" height="3" fill="#fff"/>
<rect x="354" y="933" width="1" height="3" fill="#fff"/>
<rect x="360" y="933" width="1" height="3" fill="#fff"/>
<rect x="367" y="933" width="1" height="3" fill="#fff"/>
<rect x="373" y="933" width="1" height="3" fill="#fff"/>
<rect x="379" y="933" width="1" height="3" fill="#fff"/>
<rect x="386" y="933" width="1" height="3" fill="#fff"/>
<rect x="392" y="933" width="1" height="3" fill="#fff"/>
<rect x="398" y="933" width="1" height="3" fill="#fff"/>
<rect x="405" y="933" width="1" height="3" fill="#fff"/>
<rect x="411" y="933" width="1" height="3" fill="#fff"/>
<rect x="418" y="933" width="1" height="5" fill="#fff"/>
<rect x="424" y="933" width="1" height="3" fill="#fff"/>
<rect x="430" y="933" width="1" height="3" fill="#fff"/>
<rect x="437" y="933" width="1" height="3" fill="#fff"/>
<rect x="443" y="933" width="1" height="3" fill="#fff"/>
<rect x="449" y="933" width="1" height="3" fill="#fff"/>
<rect x="456" y="933" width="1" height="3" fill="#fff"/>
<rect x="462" y="933" width="1" height="3" fill="#fff"/>
<rect x="468" y="933" width="1" height="3" fill="#fff"/>
<rect x="475" y="933" width="1" height="3" fill="#fff"/>
<rect x="481" y="933" width="1" height="3" fill="#fff"/>
<rect x="488" y="933" width="1" height="3" fill="#fff"/>
<rect x="494" y="933" width="1" height="5" fill="#fff"/>
<rect x="500" y="933" width="1" height="3" fill="#fff"/>
<rect x="507" y="933" width="1" height="3" fill="#fff"/>
<rect x="513" y="933" width="1" height="3" fill="#fff"/>
<rect x="519" y="933" width="1" height="3" fill="#fff"/>
<rect x="526" y="933" width="1" height="3" fill="#fff"/>
<rect x="532" y="933" width="1" height="3" fill="#fff"/>
<rect x="539" y="933" width="1" height="3" fill="#fff"/>
<rect x="545" y="933" width="1" height="3" fill="#fff"/>
<rect x="551" y="933" width="1" height="3" fill="#fff"/>
<rect x="558" y="933" width="1" height="3" fill="#fff"/>
<rect x="564" y="933" width="1" height="3" fill="#fff"/>
<rect x="570" y="933" width="1" height="5" fill="#fff"/>
<rect x="577" y="933" width="1" height="3" fill="#fff"/>
<rect x="583" y="933" width="1" height="3" fill="#fff"/>
<rect x="589" y="933" width="1" height="3" fill="#fff"/>
<rect x="596" y="933" width="1" height="3" fill="#fff"/>
<rect x="602" y="933" width="1" height="3" fill="#fff"/>
<rect x="609" y="933" width="1" height="3" fill="#fff"/>
<rect x="615" y="933" width="1" height="3" fill="#fff"/>
<rect x="621" y="933" width="1" height="3" fill="#fff"/>
<rect x="628" y="933" width="1" height="3" fill="#fff"/>
<rect x="634" y="933" width="1" height="3" fill="#fff"/>
<rect x="640" y="933" width="1" height="3" fill="#fff"/>
<rect x="647" y="933" width="1" height="5" fill="#fff"/>
<rect x="653" y="933" width="1" height="3" fill="#fff"/>
<rect x="659" y="933" width="1" height="3" fill="#fff"/>
<rect x="666" y="933" width="1" height="3" fill="#fff"/>
<rect x="672" y="933" width="1" height="3" fill="#fff"/>
<rect x="679" y="933" width="1" height="3" fill="#fff"/>
<rect x="685" y="933" width="1" height="3" fill="#fff"/>
<rect x="691" y="933" width="1" height="3" fill="#fff"/>
<rect x="698" y="933" width="1" height="3" fill="#fff"/>
<rect x="704" y="933" width="1" height="3" fill="#fff"/>
<rect x="710" y="933" width="1" height="3" fill="#fff"/>
<rect x="717" y="933" width="1" height="3" fill="#fff"/>
<rect x="723" y="933" width="1" height="5" fill="#fff"/>
<rect x="729" y="933" width="1" height="3" fill="#fff"/>
<rect x="736" y="933" width="1" height="3" fill="#fff"/>
<rect x="742" y="933" width="1" height="3" fill="#fff"/>
<rect x="749" y="933" width="1" height="3" fill="#fff"/>
<rect x="755" y="933" width="1" height="3" fill="#fff"/>
<rect x="761" y="933" width="1" height="3" fill="#fff"/>
<rect x="768" y="933" width="1" height="3" fill="#fff"/>
<rect x="774" y="933" width="1" height="3" fill="#fff"/>
<rect x="780" y="933" width="1" height="3" fill="#fff"/>
<rect x="787" y="933" width="1" height="3" fill="#fff"/>
<rect x="793" y="933" width="1" height="3" fill="#fff"/>
<rect x="799" y="933" width="1" height="5" fill="#fff"/>
<rect x="806" y="933" width="1" height="3" fill="#fff"/>
<rect x="812" y="933" width="1" height="3" fill="#fff"/>
<rect x="819" y="933" width="1" height="3" fill="#fff"/>
<rect x="825" y="933" width="1" height="3" fill="#fff"/>
<rect x="831" y="933" width="1" height="3" fill="#fff"/>
<rect x="838" y="933" width="1" height="3" fill="#fff"/>
<rect x="844" y="933" width="1" height="3" fill="#fff"/>
<rect x="850" y="933" width="1" height="3" fill="#fff"/>
<rect x="857" y="933" width="1" height="3" fill="#fff"/>
<rect x="863" y="933" width="1" height="3" fill="#fff"/>
<rect x="869" y="933" width="1" height="3" fill="#fff"/>
<rect x="876" y="933" width="1" height="5" fill="#fff"/>
<rect x="882" y="933" width="1" height="3" fill="#fff"/>
<rect x="889" y="933" width="1" height="3" fill="#fff"/>
<rect x="895" y="933" width="1" height="3" fill="#fff"/>
<rect x="901" y="933" width="1" height="3" fill="#fff"/>
<rect x="908" y="933" width="1" height="3" fill="#fff"/>
<rect x="914" y="933" width="1" height="3" fill="#fff"/>
<rect x="920" y="933" width="1" height="3" fill="#fff"/>
<rect x="927" y="933" width="1" height="3" fill="#fff"/>
<rect x="933" y="933" width="1" height="3" fill="#fff"/>
<rect x="940" y="933" width="1" height="3" fill="#fff"/>
<rect x="946" y="933" width="1" height="3" fill="#fff"/>
<rect x="952" y="933" width="1" height="5" fill="#fff"/>
<rect x="959" y="933" width="1" height="3" fill="#fff"/>
<rect x="965" y="933" width="1" height="3" fill="#fff"/>
<rect x="971" y="933" width="1" height="3" fill="#fff"/>
<rect x="978" y="933" width="1" height="3" fill="#fff"/>
<rect x="984" y="933" width="1" height="3" fill="#fff"/>
<rect x="990" y="933" width="1" height="3" fill="#fff"/>
<rect x="997" y="933" width="1" height="3" fill="#fff"/>
<rect x="1003" y="933" width="1" height="3" fill="#fff"/>
<rect x="1010" y="933" width="1" height="3" fill="#fff"/>
<rect x="1016" y="933" width="1" height="3" fill="#fff"/>
<rect x="1022" y="933" width="1" height="3" fill="#fff"/>
<rect x="1029" y="933" width="1" height="5" fill="#fff"/>
<rect x="1035" y="933" width="1" height="3" fill="#fff"/>
<rect x="1041" y="933" width="1" height="3" fill="#fff"/>
<rect x="1048" y="933" width="1" height="3" fill="#fff"/>
<rect x="1054" y="933" width="1" height="3" fill="#fff"/>
<rect x="1060" y="933" width="1" height="3" fill="#fff"/>
<rect x="1067" y="933" width="1" height="3" fill="#fff"/>
<rect x="1073" y="933" width="1" height="3" fill="#fff"/>
<rect x="1080" y="933" width="1" height="3" fill="#fff"/>
<rect x="1086" y="933" width="1" height="3" fill="#fff"/>
<rect x="1092" y="933" width="1" height="3" fill="#fff"/>
<rect x="1099" y="933" width="1" height="3" fill="#fff"/>
<rect x="1105" y="933" width="1" height="5" fill="#fff"/>
<rect x="1111" y="933" width="1" height="3" fill="#fff"/>
<rect x="1118" y="933" width="1" height="3" fill="#fff"/>
<rect x="1124" y="933" width="1" height="3" fill="#fff"/>
<rect x="1130" y="933" width="1" height="3" fill="#fff"/>
<rect x="1137" y="933" width="1" height="3" fill="#fff"/>
<rect x="1143" y="933" width="1" height="3" fill="#fff"/>
<rect x="1150" y="933" width="1" height="3" fill="#fff"/>
<rect x="1156" y="933" width="1" height="3" fill="#fff"/>
<rect x="1162" y="933" width="1" height="3" fill="#fff"/>
<rect x="1169" y="933" width="1" height="3" fill="#fff"/>
<rect x="1175" y="933" width="1" height="3" fill="#fff"/>
<rect x="1181" y="933" width="1" height="5" fill="#fff"/>
<rect x="1188" y="933" width="1" height="3" fill="#fff"/>
<rect x="1194" y="933" width="1" height="3" fill="#fff"/>
<rect x="1200" y="933" width="1" height="3" fill="#fff"/>
<rect x="1207" y="933" width="1" height="3" fill="#fff"/>
<rect x="1213" y="933" width="1" height="3" fill="#fff"/>
<rect x="1220" y="933" width="1" height="3" fill="#fff"/>
<rect x="1226" y="933" width="1" height="3" fill="#fff"/>
<rect x="1232" y="933" width="1" height="3" fill="#fff"/>
<rect x="1239" y="933" width="1" height="3" fill="#fff"/>
<rect x="1245" y="933" width="1" height="3" fill="#fff"/>
<rect x="1251" y="933" width="1" height="3" fill="#fff"/>
<rect x="1258" y="933" width="1" height="5" fill="#fff"/>
<rect x="1264" y="933" width="1" height="3" fill="#fff"/>
<rect x="1270" y="933" width="1" height="3" fill="#fff"/>
<rect x="1277" y="933" width="1" height="3" fill="#fff"/>
<rect x="1283" y="933" width="1" height="3" fill="#fff"/>
<rect x="1290" y="933" width="1" height="3" fill="#fff"/>
<rect x="1296" y="933" width="1" height="3" fill="#fff"/>
<rect x="1302" y="933" width="1" height="3" fill="#fff"/>
<rect x="1309" y="933" width="1" height="3" fill="#fff"/>
<rect x="1315" y="933" width="1" height="3" fill="#fff"/>
<rect x="1321" y="933" width="1" height="3" fill="#fff"/>
<rect x="1328" y="933" width="1" height="3" fill="#fff"/>
<rect x="1334" y="933" width="1" height="5" fill="#fff"/>
<rect x="1341" y="933" width="1" height="3" fill="#fff"/>
<rect x="1347" y="933" width="1" height="3" fill="#fff"/>
<rect x="1353" y="933" width="1" height="3" fill="#fff"/>
<rect x="1360" y="933" width="1" height="3" fill="#fff"/>
<rect x="1366" y="933" width="1" height="3" fill="#fff"/>
<rect x="1372" y="933" width="1" height="3" fill="#fff"/>
<rect x="1379" y="933" width="1" height="3" fill="#fff"/>
<rect x="1385" y="933" width="1" height="3" fill="#fff"/>
<rect x="1391" y="933" width="1" height="3" fill="#fff"/>
<rect x="1398" y="933" width="1" height="3" fill="#fff"/>
<rect x="1404" y="933" width="1" height="3" fill="#fff"/>
<rect x="1411" y="933" width="1" height="5" fill="#fff"/>
<rect x="1417" y="933" width="1" height="3" fill="#fff"/>
<rect x="1423" y="933" width="1" height="3" fill="#fff"/>
<rect x="1430" y="933" width="1" height="3" fill="#fff"/>
<rect x="1436" y="933" width="1" height="3" fill="#fff"/>
<rect x="1442" y="933" width="1" height="3" fill="#fff"/>
<rect x="1449" y="933" width="1" height="3" fill="#fff"/>
<rect x="1455" y="933" width="1" height="3" fill="#fff"/>
<rect x="1461" y="933" width="1" height="3" fill="#fff"/>
<rect x="1468" y="933" width="1" height="3" fill="#fff"/>
<rect x="1474" y="933" width="1" height="3" fill="#fff"/>
<rect x="1481" y="933" width="1" height="3" fill="#fff"/>
<rect x="1487" y="933" width="1" height="5" fill="#fff"/>
<rect x="1493" y="933" width="1" height="3" fill="#fff"/>
<rect x="1500" y="933" width="1" height="3" fill="#fff"/>
<rect x="1506" y="933" width="1" height="3" fill="#fff"/>
<rect x="1512" y="933" width="1" height="3" fill="#fff"/>
<rect x="1519" y="933" width="1" height="3" fill="#fff"/>
<rect x="1525" y="933" width="1" height="3" fill="#fff"/>
<rect x="1531" y="933" width="1" height="3" fill="#fff"/>
<rect x="1538" y="933" width="1" height="3" fill="#fff"/>
<rect x="1544" y="933" width="1" height="3" fill="#fff"/>
<rect x="1551" y="933" width="1" height="3" fill="#fff"/>
<rect x="1557" y="933" width="1" height="3" fill="#fff"/>
<rect x="1563" y="933" width="1" height="5" fill="#fff"/>
<rect x="1570" y="933" width="1" height="3" fill="#fff"/>
<rect x="1576" y="933" width="1" height="3" fill="#fff"/>
<rect x="1582" y="933" width="1" height="3" fill="#fff"/>
<rect x="1589" y="933" width="1" height="3" fill="#fff"/>
<rect x="1595" y="933" width="1" height="3" fill="#fff"/>
<rect x="1601" y="933" width="1" height="3" fill="#fff"/>
<rect x="1608" y="933" width="1" height="3" fill="#fff"/>
<rect x="1614" y="933" width="1" height="3" fill="#fff"/>
<rect x="1621" y="933" width="1" height="3" fill="#fff"/>
<rect x="1627" y="933" width="1" height="3" fill="#fff"/>
<rect x="1633" y="933" width="1" height="3" fill="#fff"/>
<rect x="1640" y="933" width="1" height="5" fill="#fff"/>
<rect x="1646" y="933" width="1" height="3" fill="#fff"/>
<rect x="1652" y="933" width="1" height="3" fill="#fff"/>
<rect x="1659" y="933" width="1" height="3" fill="#fff"/>
<rect x="1665" y="933" width="1" height="3" fill="#fff"/>
<rect x="1671" y="933" width="1" height="3" fill="#fff"/>
<rect x="1678" y="933" width="1" height="3" fill="#fff"/>
<rect x="1684" y="933" width="1" height="3" fill="#fff"/>
<rect x="1691" y="933" width="1" height="3" fill="#fff"/>
<rect x="1697" y="933" width="1" height="3" fill="#fff"/>
<rect x="1703" y="933" width="1" height="3" fill="#fff"/>
<rect x="1710" y="933" width="1" height="3" fill="#fff"/>
<rect x="1716" y="933" width="1" height="5" fill="#fff"/>
<rect x="1722" y="933" width="1" height="3" fill="#fff"/>
<rect x="1729" y="933" width="1" height="3" fill="#fff"/>
<rect x="1735" y="933" width="1" height="3" fill="#fff"/>
<rect x="1742" y="933" width="1" height="3" fill="#fff"/>
<rect x="1748" y="933" width="1" height="3" fill="#fff"/>
<rect x="1754" y="933" width="1" height="3" fill="#fff"/>
<rect x="1761" y="933" width="1" height="3" fill="#fff"/>
<rect x="1767" y="933" width="1" height="3" fill="#fff"/>
<rect x="1773" y="933" width="1" height="3" fill="#fff"/>
<rect x="1780" y="933" width="1" height="3" fill="#fff"/>
<rect x="1786" y="933" width="1" height="3" fill="#fff"/>
<rect x="1792" y="933" width="1" height="5" fill="#fff"/>
<rect x="1799" y="933" width="1" height="3" fill="#fff"/>
<rect x="1803" y="933" width="1" height="5" fill="#fff"/>
<rect x="1841" y="79" width="18" height="857" fill="url(#cb)"/>
<rect x="1841" y="74" width="18" height="3" fill="#e85080"/>
<rect x="1841" y="937" width="18" height="3" fill="#fff"/>
</svg>
<div id="tx">
<div class="t b" style="left:809px;top:5.8px;letter-spacing:-0.397px;">AOS</div>
<div class="t b" style="left:838px;top:5.8px;letter-spacing:-0.065px;">Thu 16 Apr 2026 02:30:32</div>
<div class="t b" style="left:971px;top:5.8px;letter-spacing:-0.397px;">AOS</div>
<div class="t b" style="left:727.7px;top:17.8px;letter-spacing:-0.153px;">CoordSystem:es18</div>
<div class="t b" style="left:831.6px;top:17.8px;letter-spacing:-0.204px;">SensorID:es18</div>
<div class="t b" style="left:916.2px;top:17.8px;letter-spacing:-0.171px;">Axis:sum</div>
<div class="t b" style="left:975.6px;top:17.8px;letter-spacing:-0.305px;">Windowing:Hanning</div>
<div class="t b" style="left:618.3px;top:29.8px;letter-spacing:0.089px;">Cuttoff(Hz):200</div>
<div class="t b" style="left:715px;top:29.8px;letter-spacing:-0.056px;">df(Hz):0.2441</div>
<div class="t b" style="left:799.5px;top:29.8px;letter-spacing:-0.090px;">Sample/Sec:500</div>
<div class="t b" style="left:901px;top:29.8px;letter-spacing:-0.091px;">PSD size:2048</div>
<div class="t b" style="left:993.8px;top:29.8px;letter-spacing:-0.161px;">Overlap(%):0</div>
<div class="t b" style="left:1082px;top:29.8px;letter-spacing:-0.046px;">TimeRes.(sec):4.096</div>
<div class="t " style="left:40.5px;top:50.5px;">2721</div>
<div class="t c" style="left:82.0209px;top:50.5px;">2750</div>
<div class="t c" style="left:134.126px;top:50.5px;">2800</div>
<div class="t c" style="left:186.231px;top:50.5px;">2850</div>
<div class="t c" style="left:238.336px;top:50.5px;">2900</div>
<div class="t c" style="left:290.441px;top:50.5px;">2950</div>
<div class="t c" style="left:342.546px;top:50.5px;">3000</div>
<div class="t c" style="left:394.651px;top:50.5px;">3050</div>
<div class="t c" style="left:446.756px;top:50.5px;">3100</div>
<div class="t c" style="left:498.861px;top:50.5px;">3150</div>
<div class="t c" style="left:550.966px;top:50.5px;">3200</div>
<div class="t c" style="left:603.071px;top:50.5px;">3250</div>
<div class="t c" style="left:655.176px;top:50.5px;">3300</div>
<div class="t c" style="left:707.281px;top:50.5px;">3350</div>
<div class="t c" style="left:759.386px;top:50.5px;">3400</div>
<div class="t c" style="left:811.491px;top:50.5px;">3450</div>
<div class="t c" style="left:863.596px;top:50.5px;">3500</div>
<div class="t c" style="left:915.701px;top:50.5px;">3550</div>
<div class="t c" style="left:967.806px;top:50.5px;">3600</div>
<div class="t c" style="left:1019.91px;top:50.5px;">3650</div>
<div class="t c" style="left:1072.02px;top:50.5px;">3700</div>
<div class="t c" style="left:1124.12px;top:50.5px;">3750</div>
<div class="t c" style="left:1176.23px;top:50.5px;">3800</div>
<div class="t c" style="left:1228.33px;top:50.5px;">3850</div>
<div class="t c" style="left:1280.44px;top:50.5px;">3900</div>
<div class="t c" style="left:1332.54px;top:50.5px;">3950</div>
<div class="t c" style="left:1384.65px;top:50.5px;">4000</div>
<div class="t c" style="left:1436.75px;top:50.5px;">4050</div>
<div class="t c" style="left:1488.86px;top:50.5px;">4100</div>
<div class="t c" style="left:1540.96px;top:50.5px;">4150</div>
<div class="t c" style="left:1593.07px;top:50.5px;">4200</div>
<div class="t c" style="left:1645.17px;top:50.5px;">4250</div>
<div class="t c" style="left:1697.28px;top:50.5px;">4300</div>
<div class="t c" style="left:1749.38px;top:50.5px;">4350</div>
<div class="t " style="left:1815.5px;top:50.5px;transform:translateX(-100%);">4401</div>
<div class="t r" style="left:0px;top:923.5px;width:43px;">0</div>
<div class="t r" style="left:0px;top:902px;width:43px;">5</div>
<div class="t r" style="left:0px;top:880.5px;width:43px;">10</div>
<div class="t r" style="left:0px;top:859px;width:43px;">15</div>
<div class="t r" style="left:0px;top:837.5px;width:43px;">20</div>
<div class="t r" style="left:0px;top:816px;width:43px;">25</div>
<div class="t r" style="left:0px;top:794.5px;width:43px;">30</div>
<div class="t r" style="left:0px;top:773px;width:43px;">35</div>
<div class="t r" style="left:0px;top:751.5px;width:43px;">40</div>
<div class="t r" style="left:0px;top:730px;width:43px;">45</div>
<div class="t r" style="left:0px;top:708.5px;width:43px;">50</div>
<div class="t r" style="left:0px;top:687px;width:43px;">55</div>
<div class="t r" style="left:0px;top:665.5px;width:43px;">60</div>
<div class="t r" style="left:0px;top:644px;width:43px;">65</div>
<div class="t r" style="left:0px;top:622.5px;width:43px;">70</div>
<div class="t r" style="left:0px;top:601px;width:43px;">75</div>
<div class="t r" style="left:0px;top:579.5px;width:43px;">80</div>
<div class="t r" style="left:0px;top:558px;width:43px;">85</div>
<div class="t r" style="left:0px;top:536.5px;width:43px;">90</div>
<div class="t r" style="left:0px;top:515px;width:43px;">95</div>
<div class="t r" style="left:0px;top:493.5px;width:43px;">100</div>
<div class="t r" style="left:0px;top:472px;width:43px;">105</div>
<div class="t r" style="left:0px;top:450.5px;width:43px;">110</div>
<div class="t r" style="left:0px;top:429px;width:43px;">115</div>
<div class="t r" style="left:0px;top:407.5px;width:43px;">120</div>
<div class="t r" style="left:0px;top:386px;width:43px;">125</div>
<div class="t r" style="left:0px;top:364.5px;width:43px;">130</div>
<div class="t r" style="left:0px;top:343px;width:43px;">135</div>
<div class="t r" style="left:0px;top:321.5px;width:43px;">140</div>
<div class="t r" style="left:0px;top:300px;width:43px;">145</div>
<div class="t r" style="left:0px;top:278.5px;width:43px;">150</div>
<div class="t r" style="left:0px;top:257px;width:43px;">155</div>
<div class="t r" style="left:0px;top:235.5px;width:43px;">160</div>
<div class="t r" style="left:0px;top:214px;width:43px;">165</div>
<div class="t r" style="left:0px;top:192.5px;width:43px;">170</div>
<div class="t r" style="left:0px;top:171px;width:43px;">175</div>
<div class="t r" style="left:0px;top:149.5px;width:43px;">180</div>
<div class="t r" style="left:0px;top:128px;width:43px;">185</div>
<div class="t r" style="left:0px;top:106.5px;width:43px;">190</div>
<div class="t r" style="left:0px;top:85px;width:43px;">195</div>
<div class="t r" style="left:0px;top:63.5px;width:43px;">200</div>
<div class="t c" style="left:51.5px;top:937.5px;">00:36:04.141
04/16/2026</div>
<div class="t c" style="left:187.432px;top:937.5px;">00:45:00.000
04/16/2026</div>
<div class="t c" style="left:263.813px;top:937.5px;">00:50:00.000
04/16/2026</div>
<div class="t c" style="left:340.194px;top:937.5px;">00:55:00.000
04/16/2026</div>
<div class="t c" style="left:416.575px;top:937.5px;">01:00:00.000
04/16/2026</div>
<div class="t c" style="left:492.956px;top:937.5px;">01:05:00.000
04/16/2026</div>
<div class="t c" style="left:569.337px;top:937.5px;">01:10:00.000
04/16/2026</div>
<div class="t c" style="left:645.718px;top:937.5px;">01:15:00.000
04/16/2026</div>
<div class="t c" style="left:722.1px;top:937.5px;">01:20:00.000
04/16/2026</div>
<div class="t c" style="left:798.481px;top:937.5px;">01:25:00.000
04/16/2026</div>
<div class="t c" style="left:874.862px;top:937.5px;">01:30:00.000
04/16/2026</div>
<div class="t c" style="left:951.243px;top:937.5px;">01:35:00.000
04/16/2026</div>
<div class="t c" style="left:1027.62px;top:937.5px;">01:40:00.000
04/16/2026</div>
<div class="t c" style="left:1104.01px;top:937.5px;">01:45:00.000
04/16/2026</div>
<div class="t c" style="left:1180.39px;top:937.5px;">01:50:00.000
04/16/2026</div>
<div class="t c" style="left:1256.77px;top:937.5px;">01:55:00.000
04/16/2026</div>
<div class="t c" style="left:1333.15px;top:937.5px;">02:00:00.000
04/16/2026</div>
<div class="t c" style="left:1409.53px;top:937.5px;">02:05:00.000
04/16/2026</div>
<div class="t c" style="left:1485.91px;top:937.5px;">02:10:00.000
04/16/2026</div>
<div class="t c" style="left:1562.29px;top:937.5px;">02:15:00.000
04/16/2026</div>
<div class="t c" style="left:1638.67px;top:937.5px;">02:20:00.000
04/16/2026</div>
<div class="t c" style="left:1715.05px;top:937.5px;">02:25:00.000
04/16/2026</div>
<div class="t c" style="left:1803px;top:937.5px;">02:30:45.422
04/16/2026</div>
<div class="t " style="left:915.3px;top:963.5px;transform:scaleX(0.81);transform-origin:0 0;">Time</div>
<div class="t " style="left:1869px;top:72.5px;">-5.00</div>
<div class="t " style="left:1869px;top:501.5px;">-9.00</div>
<div class="t " style="left:1869px;top:929px;">-13.00</div>
<div class="t" style="left:1913px;top:508px;transform:translate(-50%,-50%) rotate(90deg);">Amplitude(Log10(g^2/Hz))</div>
</div>
</body></html>
